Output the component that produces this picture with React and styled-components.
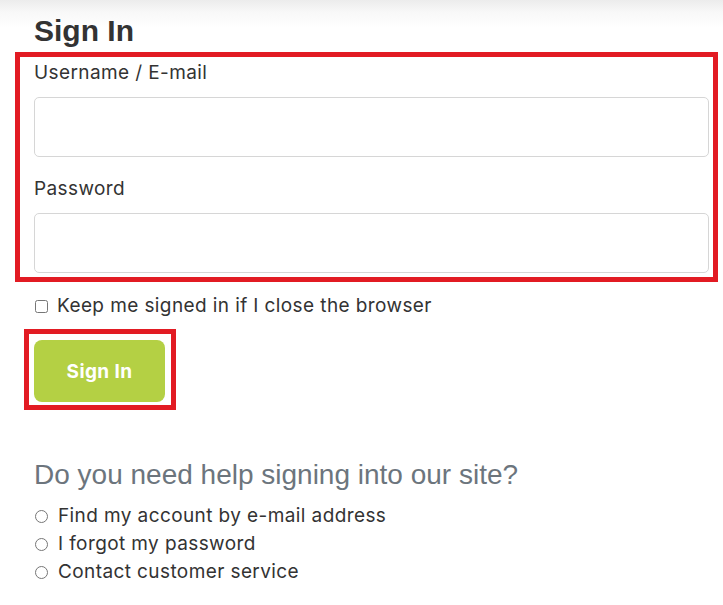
import React from 'react';
import styled, { createGlobalStyle } from 'styled-components';

const GlobalStyle = createGlobalStyle`
  html, body {
    margin: 0;
    padding: 0;
    background: #fff;
  }
  body {
    font-family: Inter, "Noto Sans", sans-serif;
    color: #333;
  }
  * {
    box-sizing: border-box;
  }
`;

const Page = styled.div`
  min-height: 605px;
  padding: 13px 0 0 34px;
  background: linear-gradient(to bottom, #ececec 0, #f8f8f8 12px, #fff 28px);
`;

const Content = styled.div`
  width: 675px;
`;

const Title = styled.h2`
  margin: 0 0 3px;
  font-family: "Liberation Sans", Arial, sans-serif;
  font-weight: 700;
  font-size: 30px;
  line-height: 36px;
  color: #333;
`;

const Highlight = styled.div`
  border: 5px solid #e21b23;
  margin-left: ${({ left }) => left}px;
  margin-right: ${({ right }) => right || 0}px;
  padding: ${({ pad }) => pad};
`;

const FieldGroup = styled(Highlight)`
  display: flex;
  flex-direction: column;
  gap: 20px;
`;

const Field = styled.div`
  display: flex;
  flex-direction: column;
`;

const bodyText = `
  font-size: 19px;
  letter-spacing: 0.4px;
  color: #333;
`;

const Label = styled.label`
  ${bodyText}
  line-height: 24px;
  margin-bottom: 12px;
`;

const TextInput = styled.input`
  width: 100%;
  height: 60px;
  border: 1px solid #d6d6d6;
  border-radius: 5px;
  padding: 0 12px;
  font-size: 18px;
  font-family: inherit;
  outline: none;
`;

const CheckRow = styled.label`
  ${bodyText}
  display: flex;
  align-items: center;
  gap: 9px;
  margin-top: 12px;
  padding-left: 1px;
  line-height: 24px;
`;

const Box = styled.input`
  width: 13px;
  height: 13px;
  margin: 0;
`;

const ButtonFrame = styled(Highlight)`
  display: inline-block;
  margin-top: 11px;
`;

const SubmitButton = styled.button`
  display: block;
  width: 131px;
  height: 62px;
  border: none;
  border-radius: 8px;
  background: #b4d044;
  color: #fff;
  font-family: inherit;
  font-weight: 700;
  font-size: 19px;
  letter-spacing: 0.4px;
  cursor: pointer;
`;

const HelpTitle = styled.h3`
  margin: 48px 0 10px;
  font-family: "Liberation Sans", Arial, sans-serif;
  font-weight: 400;
  font-size: 28px;
  line-height: 34px;
  color: #6c757d;
`;

const OptionList = styled.div`
  display: flex;
  flex-direction: column;
`;

const Option = styled.label`
  ${bodyText}
  display: flex;
  align-items: center;
  gap: 10px;
  padding-left: 1px;
  line-height: 28px;
`;

const Radio = styled.input`
  width: 13px;
  height: 13px;
  margin: 0;
`;

const helpOptions = [
  'Find my account by e-mail address',
  'I forgot my password',
  'Contact customer service',
];

export default function App() {
  return (
    <>
      <GlobalStyle />
      <Page>
        <Content>
          <Title>Sign In</Title>
          <FieldGroup left={-19} right={-9} pad="4px 4px 4px 14px">
            <Field>
              <Label htmlFor="user">Username / E-mail</Label>
              <TextInput id="user" type="text" />
            </Field>
            <Field>
              <Label htmlFor="pass">Password</Label>
              <TextInput id="pass" type="password" />
            </Field>
          </FieldGroup>
          <CheckRow>
            <Box type="checkbox" />
            Keep me signed in if I close the browser
          </CheckRow>
          <ButtonFrame left={-10} pad="6px 6px 3px 5px">
            <SubmitButton type="button">Sign In</SubmitButton>
          </ButtonFrame>
          <HelpTitle>Do you need help signing into our site?</HelpTitle>
          <OptionList>
            {helpOptions.map((text) => (
              <Option key={text}>
                <Radio type="radio" name="help" />
                {text}
              </Option>
            ))}
          </OptionList>
        </Content>
      </Page>
    </>
  );
}
